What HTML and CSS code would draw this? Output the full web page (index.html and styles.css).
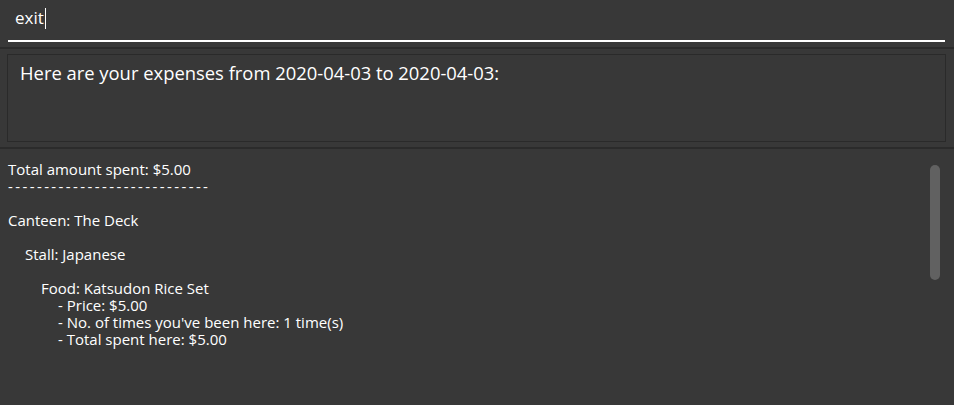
FILE: index.html
```html
<!DOCTYPE html>
<html>
<head>
<meta charset="utf-8">
<link rel="stylesheet" href="styles.css">
</head>
<body>
<div class="app">
  <div class="command">
    <div class="input"><span class="typed">exit</span><span class="caret"></span></div>
  </div>
  <div class="result-wrap">
    <div class="result">Here are your expenses from 2020-04-03 to 2020-04-03:</div>
  </div>
  <div class="list">
    <div class="content">
      <div class="line">Total amount spent: $5.00</div>
      <div class="line dashes">----------------------------</div>
      <div class="line blank"></div>
      <div class="line">Canteen: The Deck</div>
      <div class="line blank"></div>
      <div class="line l1">Stall: Japanese</div>
      <div class="line blank"></div>
      <div class="line l2">Food: Katsudon Rice Set</div>
      <div class="line l3">- Price: $5.00</div>
      <div class="line l3">- No. of times you've been here: 1 time(s)</div>
      <div class="line l3">- Total spent here: $5.00</div>
    </div>
    <div class="scrollbar"><div class="thumb"></div></div>
  </div>
</div>
</body>
</html>
```
FILE: styles.css
```css
html, body {
  margin: 0;
  padding: 0;
  background: #383838;
  width: 954px;
  height: 405px;
  overflow: hidden;
  font-family: "Open Sans", "Noto Sans", sans-serif;
  color: #ffffff;
}
.app {
  display: flex;
  flex-direction: column;
  height: 405px;
}
.command {
  padding: 0 9px 0 8px;
  height: 47px;
  box-sizing: border-box;
}
.input {
  height: 42px;
  box-sizing: border-box;
  border-bottom: 2px solid #ffffff;
  padding: 6px 0 0 7px;
  font-size: 17px;
  line-height: 24px;
  display: flex;
  align-items: flex-start;
}
.caret {
  display: inline-block;
  width: 1px;
  height: 21px;
  background: #ffffff;
  margin-top: 2px;
  margin-left: 1px;
}
.result-wrap {
  border-top: 2px solid #2b2b2b;
  border-bottom: 2px solid #2b2b2b;
  padding: 5px 8px 5px 7px;
}
.result {
  height: 88px;
  box-sizing: border-box;
  border: 1px solid #2a2a2a;
  padding: 6px 12px;
  font-size: 18.4px;
  line-height: 24px;
}
.list {
  flex: 1;
  display: flex;
  padding: 12px 0 0 8px;
}
.content {
  flex: 1;
  font-size: 15px;
  line-height: 17px;
}
.line {
  height: 17px;
  white-space: pre;
}
.dashes { letter-spacing: 2.4px; }
.l1 { padding-left: 17px; }
.l2 { padding-left: 33px; }
.l3 { padding-left: 50px; }
.scrollbar {
  width: 10px;
  margin-right: 14px;
  padding-top: 4px;
}
.thumb {
  width: 10px;
  height: 115px;
  background: #616161;
  border-radius: 5px;
}
```
